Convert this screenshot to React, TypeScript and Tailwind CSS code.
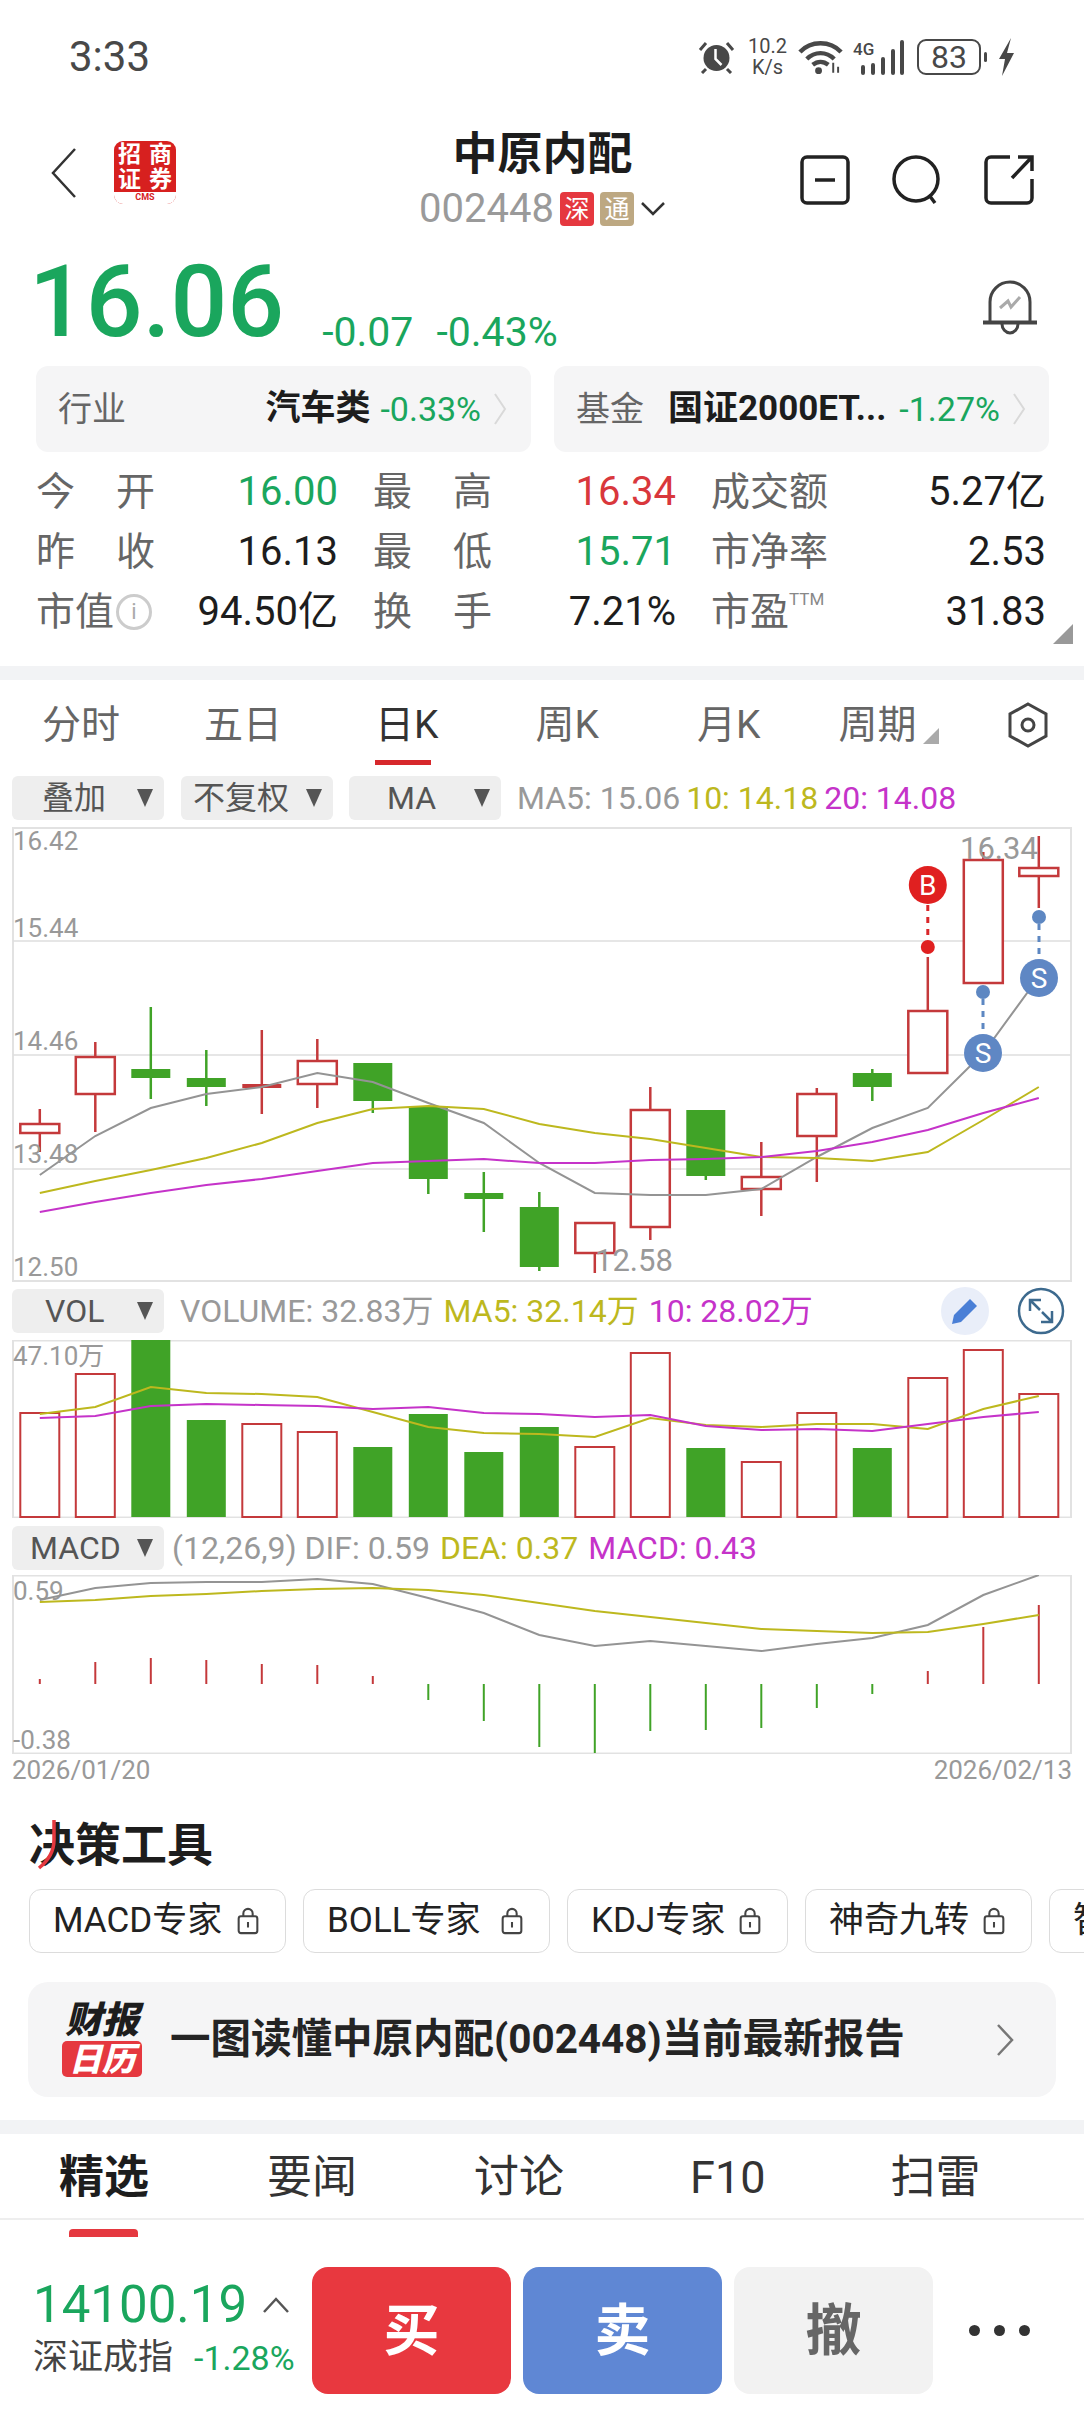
import React from "react";

// x position of the n-th trading day on all three charts
const dayX = (i: number) => 39.8 + 55.5 * i;

const RED = "#c4393b";
const GREEN = "#40a327";
const YELLOW = "#bdb81e";
const MAGENTA = "#c533c9";
const GRAY_LINE = "#949494";

interface Candle {
  up: boolean;
  high: number;
  low: number;
  top: number;
  bottom: number;
  filled?: boolean;
}

const candles: Candle[] = [
  { up: true, high: 282, low: 325, top: 297, bottom: 306 },
  { up: true, high: 215, low: 305, top: 230, bottom: 267 },
  { up: false, high: 180, low: 272, top: 242, bottom: 251 },
  { up: false, high: 223, low: 279, top: 251, bottom: 260 },
  { up: true, high: 203, low: 287, top: 257, bottom: 261, filled: true },
  { up: true, high: 212, low: 281, top: 234, bottom: 257 },
  { up: false, high: 236, low: 286, top: 236, bottom: 274 },
  { up: false, high: 279, low: 367, top: 279, bottom: 352 },
  { up: false, high: 345, low: 405, top: 366, bottom: 372 },
  { up: false, high: 365, low: 444, top: 380, bottom: 440 },
  { up: true, high: 396, low: 446, top: 396, bottom: 426 },
  { up: true, high: 260, low: 413, top: 283, bottom: 400 },
  { up: false, high: 283, low: 353, top: 283, bottom: 349 },
  { up: true, high: 315, low: 389, top: 350, bottom: 362 },
  { up: true, high: 261, low: 355, top: 267, bottom: 309 },
  { up: false, high: 242, low: 274, top: 246, bottom: 260 },
  { up: true, high: 130, low: 246, top: 184, bottom: 246 },
  { up: true, high: 25, low: 156, top: 33, bottom: 156 },
  { up: true, high: 9, low: 81, top: 41, bottom: 49 },
];

const priceMa5 = [348, 309, 281, 267, 260, 246, 255, 276, 296, 336, 366, 368, 368, 362, 330, 301, 281, 226, 150];
const priceMa10 = [366, 354, 343, 331, 316, 296, 282, 279, 282, 297, 306, 312, 321, 330, 331, 334, 325, 293, 260];
const priceMa20 = [385, 375, 366, 358, 352, 344, 336, 334, 332, 336, 336, 333, 332, 330, 324, 315, 303, 286, 271];

const volumeTops = [72, 33, 0, 80, 83, 91, 107, 74, 112, 87, 106, 12, 108, 121, 72, 108, 37, 9, 53];
const volumeMa5 = [74, 67, 47, 53, 54, 57, 72, 87, 93, 94, 97, 78, 85, 87, 84, 84, 89, 69, 56];
const volumeMa10 = [78, 76, 66, 64, 65, 66, 69, 67, 73, 74, 77, 75, 86, 90, 89, 91, 84, 77, 72];

const dif = [25, 13, 8, 7, 7, 4, 9, 23, 38, 60, 71, 66, 71, 76, 69, 63, 50, 20, 0];
const dea = [27, 25, 21, 19, 16, 14, 13, 15, 20, 28, 36, 42, 48, 54, 56, 58, 57, 49, 40];
const macdEnds = [104, 87, 83, 85, 89, 90, 101, 125, 146, 172, 178, 156, 155, 153, 133, 119, 96, 52, 30];
const MACD_BASE = 109;

function Polyline({ values, color }: { values: number[]; color: string }) {
  const points = values.map((y, i) => `${dayX(i)},${y}`).join(" ");
  return <polyline points={points} fill="none" stroke={color} strokeWidth={2} />;
}

function PriceChart() {
  return (
    <svg viewBox="12 0 1060 455" className="ml-3 block h-[455px] w-[1060px]">
      <rect x="13" y="1" width="1058" height="453" fill="#fff" stroke="#e2e2e2" strokeWidth="2" />
      {[114, 228, 342].map((y) => (
        <line key={y} x1="13" x2="1071" y1={y} y2={y} stroke="#dedede" strokeWidth="1.5" />
      ))}
      {candles.map((c, i) => {
        const x = dayX(i);
        const color = c.up ? RED : GREEN;
        return (
          <g key={i}>
            <line x1={x} x2={x} y1={c.high} y2={c.low} stroke={color} strokeWidth={2.5} />
            {c.up && !c.filled ? (
              <rect x={x - 19.5} y={c.top} width={39} height={c.bottom - c.top} fill="#fff" stroke={color} strokeWidth={2.5} />
            ) : (
              <rect x={x - 19.5} y={c.top} width={39} height={c.bottom - c.top} fill={color} />
            )}
          </g>
        );
      })}
      <Polyline values={priceMa5} color={GRAY_LINE} />
      <Polyline values={priceMa10} color={YELLOW} />
      <Polyline values={priceMa20} color={MAGENTA} />
      <g fill="#999" fontSize="26">
        <text x="13" y="23">16.42</text>
        <text x="13" y="110">15.44</text>
        <text x="13" y="223">14.46</text>
        <text x="13" y="336">13.48</text>
        <text x="13" y="449">12.50</text>
        <text x="960" y="32" fontSize="31">16.34</text>
        <text x="595" y="444" fontSize="31">12.58</text>
      </g>
      {/* buy and sell markers */}
      <line x1="927.8" x2="927.8" y1="78" y2="114" stroke="#d9262a" strokeWidth="3" strokeDasharray="6 6" />
      <circle cx="927.8" cy="120" r="7" fill="#e02020" />
      <circle cx="927.8" cy="58" r="19" fill="#e02020" />
      <text x="927.8" y="68" fill="#fff" fontSize="28" textAnchor="middle">B</text>
      <line x1="983" x2="983" y1="172" y2="208" stroke="#5d87c2" strokeWidth="3" strokeDasharray="6 6" />
      <circle cx="983" cy="165" r="7" fill="#5d87c2" />
      <circle cx="983" cy="226" r="19" fill="#5f87c4" />
      <text x="983" y="236" fill="#fff" fontSize="28" textAnchor="middle">S</text>
      <line x1="1039" x2="1039" y1="97" y2="132" stroke="#5d87c2" strokeWidth="3" strokeDasharray="6 6" />
      <circle cx="1039" cy="90" r="7" fill="#5d87c2" />
      <circle cx="1039" cy="151" r="19" fill="#5f87c4" />
      <text x="1039" y="161" fill="#fff" fontSize="28" textAnchor="middle">S</text>
    </svg>
  );
}

function VolumeChart() {
  return (
    <svg viewBox="12 0 1060 178" className="ml-3 block h-[178px] w-[1060px]">
      <rect x="13" y="0.5" width="1058" height="177" fill="#fff" stroke="#e2e2e2" strokeWidth="2" />
      {volumeTops.map((top, i) => {
        const x = dayX(i);
        return candles[i].up ? (
          <rect key={i} x={x - 19.5} y={top + 1} width={39} height={176 - top} fill="#fff" stroke={RED} strokeWidth={2} />
        ) : (
          <rect key={i} x={x - 19.5} y={top} width={39} height={177 - top} fill={GREEN} />
        );
      })}
      <text x="13" y="25" fill="#999" fontSize="26">47.10万</text>
      <Polyline values={volumeMa5} color={YELLOW} />
      <Polyline values={volumeMa10} color={MAGENTA} />
    </svg>
  );
}

function MacdChart() {
  return (
    <svg viewBox="12 0 1060 179" className="ml-3 block h-[179px] w-[1060px]">
      <rect x="13" y="0.5" width="1058" height="178" fill="#fff" stroke="#e2e2e2" strokeWidth="2" />
      <text x="13" y="25" fill="#999" fontSize="26">0.59</text>
      <text x="13" y="174" fill="#999" fontSize="26">-0.38</text>
      {macdEnds.map((end, i) => (
        <line
          key={i}
          x1={dayX(i)}
          x2={dayX(i)}
          y1={MACD_BASE}
          y2={end}
          stroke={end < MACD_BASE ? RED : GREEN}
          strokeWidth={2}
        />
      ))}
      <Polyline values={dif} color={GRAY_LINE} />
      <Polyline values={dea} color={YELLOW} />
    </svg>
  );
}

function StatusBar() {
  return (
    <div className="flex h-[114px] items-center justify-between pl-[69px] pr-[70px] text-[#484848]">
      <span className="text-[42px] leading-none">3:33</span>
      <div className="flex items-center">
        <svg viewBox="0 0 37 34" className="h-[34px] w-[37px]" fill="#484848">
          <circle cx="18.5" cy="18" r="13" />
          <path d="M17.5 9v10l6 6" fill="none" stroke="#fff" strokeWidth="2.5" />
          <path d="M2 10 8 3M35 10 29 3M8 29l-4 4M29 29l4 4" fill="none" stroke="#484848" strokeWidth="3" />
        </svg>
        <div className="ml-[12px] flex w-[41px] flex-col items-center text-[20px] leading-[21px]">
          <span>10.2</span>
          <span>K/s</span>
        </div>
        <svg viewBox="0 0 46 36" className="ml-[10px] h-[36px] w-[45px]" fill="none" stroke="#484848" strokeWidth="4.500">
          <path d="M2 13C13 1 33 1 44 13" />
          <path d="M9 20c8-8 20-8 28 0" />
          <path d="M15 26c5-4 11-4 16 0" />
          <circle cx="21" cy="32" r="3.500" fill="#484848" stroke="none" />
          <path d="M36 24v10M41 28v6" strokeWidth="2" />
        </svg>
        <div className="relative ml-[10px] h-[36px] w-[52px]">
          <span className="absolute left-0 top-0 text-[17px] font-medium leading-[20px]">4G</span>
          <svg viewBox="0 0 52 36" className="h-[36px] w-[52px]" fill="#484848">
            <rect x="8" y="26" width="4" height="10" rx="2" />
            <rect x="18" y="24" width="4" height="12" rx="2" />
            <rect x="28" y="18" width="4" height="18" rx="2" />
            <rect x="38" y="10" width="4" height="26" rx="2" />
            <rect x="47" y="1" width="4" height="35" rx="2" />
          </svg>
        </div>
        <div className="ml-[12px] flex h-[36px] w-[64px] items-center justify-center rounded-[9px] border-2 border-[#484848] text-[32px] leading-none">
          83
        </div>
        <svg viewBox="0 0 32 38" className="ml-[1px] h-[38px] w-[32px]" fill="#484848">
          <rect x="2" y="14" width="3" height="10" rx="1.5" />
          <path d="M29 0 17 21h6l-3 17 12-23h-7z" />
        </svg>
      </div>
    </div>
  );
}

function NavBar() {
  return (
    <div className="grid h-[136px] grid-cols-[1fr_auto_1fr] items-start pl-[51px] pr-[50px] pt-[27px]">
      <div className="flex items-center">
        <svg viewBox="0 0 26 50" className="h-[50px] w-[26px]" fill="none" stroke="#333" strokeWidth="2.5">
          <path d="M24 1 2 25l22 24" />
        </svg>
        <div className="ml-[37px] flex h-[63px] w-[62px] flex-col overflow-hidden rounded-[9px] bg-[#d7201f]">
          <div className="grid flex-1 grid-cols-2 place-items-center pt-[2px] text-[23px] font-bold leading-[22px] text-white">
            <span>招</span>
            <span>商</span>
            <span>证</span>
            <span>券</span>
          </div>
          <div className="flex h-[12px] items-center justify-center bg-white text-[9px] font-bold text-[#d7201f]">CMS</div>
        </div>
      </div>
      <div className="-mt-[11px] flex flex-col items-center">
        <div className="text-[45px] font-bold leading-[50px] text-[#1d1d1d]">中原内配</div>
        <div className="mt-[11px] flex items-center">
          <span className="text-[40px] leading-[36px] text-[#9a9a9a]">002448</span>
          <span className="ml-[6px] flex h-[34px] w-[34px] items-center justify-center rounded-[4px] bg-[#e5383f] text-[25px] leading-none text-white">深</span>
          <span className="ml-[6px] flex h-[34px] w-[34px] items-center justify-center rounded-[4px] bg-[#bda882] text-[25px] leading-none text-white">通</span>
          <svg viewBox="0 0 26 14" className="ml-[6px] h-[14px] w-[26px]" fill="none" stroke="#333" strokeWidth="2.5">
            <path d="M2 1l11 11L24 1" />
          </svg>
        </div>
      </div>
      <div className="flex items-center justify-end gap-[42px] pt-[14px]">
        <svg viewBox="0 0 50 50" className="h-[50px] w-[50px]" fill="none" stroke="#222" strokeWidth="3.5">
          <rect x="2" y="2" width="46" height="46" rx="5" />
          <path d="M15 25h20" />
        </svg>
        <svg viewBox="0 0 50 50" className="h-[50px] w-[50px]" fill="none" stroke="#222" strokeWidth="3.5">
          <circle cx="24" cy="24" r="22" />
          <path d="M37 40l6 8" />
        </svg>
        <svg viewBox="0 0 50 50" className="h-[50px] w-[50px]" fill="none" stroke="#222" strokeWidth="3.5">
          <path d="M26 2H7a5 5 0 0 0-5 5v36a5 5 0 0 0 5 5h36a5 5 0 0 0 5-5V24" />
          <path d="M28 23 47 3M34 2h14v14" />
        </svg>
      </div>
    </div>
  );
}

function PriceRow() {
  return (
    <div className="flex h-[116px] items-start justify-between pl-[29px] pr-[46px]">
      <div className="flex items-end">
        <span className="text-[100px] font-medium leading-[104px] text-[#1aa65d]">16.06</span>
        <span className="mb-[2px] ml-[38px] text-[41px] leading-[40px] text-[#1aa65d]">-0.07</span>
        <span className="mb-[2px] ml-[23px] text-[41px] leading-[40px] text-[#1aa65d]">-0.43%</span>
      </div>
      <svg viewBox="0 0 56 58" className="mt-[28px] h-[58px] w-[56px]" fill="none" stroke="#444" strokeWidth="3">
        <path d="M8 44V24a20 20 0 0 1 40 0v20" />
        <path d="M1 44.500h54" strokeWidth="4" />
        <path d="M20 46a8 9 0 0 0 16 0" />
        <path d="M18 30l8-7 3 6 9-10" stroke="#aaa" />
      </svg>
    </div>
  );
}

function InfoCard({ label, name, change, wide }: { label: string; name: string; change: string; wide?: boolean }) {
  return (
    <div className={`flex h-[86px] w-[495px] items-center rounded-[12px] bg-[#f5f5f6] pl-[22px] ${wide ? "pr-[20px]" : "pr-[24px]"}`}>
      <span className="shrink-0 whitespace-nowrap text-[34px] text-[#666]">{label}</span>
      <span className={`${wide ? "ml-[24px]" : "ml-auto"} whitespace-nowrap text-[35px] font-bold text-[#1d1d1d]`}>{name}</span>
      <span className={`${wide ? "ml-[13px]" : "ml-[10px]"} whitespace-nowrap text-[34px] text-[#1aa65d]`}>{change}</span>
      <svg viewBox="0 0 14 32" className="ml-[12px] h-[32px] w-[14px] shrink-0" fill="none" stroke="#d9d9d9" strokeWidth="2">
        <path d="M2 1l10 15L2 31" />
      </svg>
    </div>
  );
}

function Stat({ label, value, tone }: { label: React.ReactNode; value: string; tone: string }) {
  return (
    <div className="flex h-[60px] items-center justify-between">
      <div className="text-[39px] text-[#666]">{label}</div>
      <span className={`text-[40px] ${tone}`}>{value}</span>
    </div>
  );
}

function Spaced({ a, b }: { a: string; b: string }) {
  return (
    <span className="flex w-[119px] justify-between">
      <span>{a}</span>
      <span>{b}</span>
    </span>
  );
}

function StatsGrid() {
  const green = "text-[#1aa65d]";
  const red = "text-[#d9373c]";
  const dark = "text-[#1d1d1d]";
  return (
    <div className="relative mt-[10px] grid h-[180px] grid-cols-[302px_303px_335px] gap-x-[35px] pl-[36px]">
      <Stat label={<Spaced a="今" b="开" />} value="16.00" tone={green} />
      <Stat label={<Spaced a="最" b="高" />} value="16.34" tone={red} />
      <Stat label="成交额" value="5.27亿" tone={dark} />
      <Stat label={<Spaced a="昨" b="收" />} value="16.13" tone={dark} />
      <Stat label={<Spaced a="最" b="低" />} value="15.71" tone={green} />
      <Stat label="市净率" value="2.53" tone={dark} />
      <Stat
        label={
          <span className="flex items-center">
            市值
            <span className="ml-[2px] flex h-[36px] w-[36px] items-center justify-center rounded-full border-[3px] border-[#ccc] text-[22px] leading-none text-[#aaa]">i</span>
          </span>
        }
        value="94.50亿"
        tone={dark}
      />
      <Stat label={<Spaced a="换" b="手" />} value="7.21%" tone={dark} />
      <Stat
        label={
          <span className="flex items-start">
            市盈<span className="mt-[8px] text-[17px] leading-none text-[#888]">TTM</span>
          </span>
        }
        value="31.83"
        tone={dark}
      />
      <div className="absolute bottom-[-2px] right-[11px] h-0 w-0 border-b-[20px] border-l-[20px] border-b-[#999] border-l-transparent" />
    </div>
  );
}

function ChartTabs() {
  return (
    <div className="flex h-[96px] items-center pb-[6px] text-[39px] leading-none text-[#666]">
      <span className="ml-[42px]">分时</span>
      <span className="ml-[84px]">五日</span>
      <span className="relative ml-[93px] text-[#333]">
        日K
        <span className="absolute -bottom-[20px] left-0 h-[5px] w-[56px] bg-[#d7282c]" />
      </span>
      <span className="ml-[97px]">周K</span>
      <span className="ml-[98px]">月K</span>
      <span className="ml-[78px]">周期</span>
      <span className="ml-[6px] mt-[22px] h-0 w-0 border-b-[16px] border-l-[16px] border-b-[#aaa] border-l-transparent" />
      <svg viewBox="0 0 40 46" className="ml-[69px] h-[46px] w-[40px]" fill="none" stroke="#444" strokeWidth="3">
        <path d="M20 2 38 12v22L20 44 2 34V12z" />
        <circle cx="20" cy="23" r="6" />
      </svg>
    </div>
  );
}

function Dropdown({ label, labelCls }: { label: string; labelCls: string }) {
  return (
    <div className="flex h-[44px] w-[152px] items-center rounded-[6px] bg-[#eeeeee] text-[#555]">
      <span className={`whitespace-nowrap text-[32px] leading-none ${labelCls}`}>{label}</span>
      <span className="ml-auto mr-[11px] h-0 w-0 border-x-[8px] border-t-[18px] border-x-transparent border-t-[#555]" />
    </div>
  );
}

function Legend({ children, tight }: { children: React.ReactNode; tight?: boolean }) {
  return (
    <div className={`flex items-center whitespace-nowrap text-[32px] leading-none ${tight ? "gap-[6px]" : "gap-[10px]"}`}>
      {children}
    </div>
  );
}

function ChartPanel() {
  return (
    <div>
      <div className="flex h-[44px] items-center pl-3">
        <Dropdown label="叠加" labelCls="ml-[30px]" />
        <div className="ml-[17px]">
          <Dropdown label="不复权" labelCls="ml-[12px]" />
        </div>
        <div className="ml-[16px]">
          <Dropdown label="MA" labelCls="ml-[38px]" />
        </div>
        <div className="ml-[16px]">
          <Legend tight>
            <span className="text-[#999]">MA5: 15.06</span>
            <span className="text-[#bdb81e]">10: 14.18</span>
            <span className="text-[#c533c9]">20: 14.08</span>
          </Legend>
        </div>
      </div>
      <div className="mt-[7px]">
        <PriceChart />
      </div>
      <div className="mt-[7px] flex h-[44px] items-center pl-3 pr-[19px]">
        <Dropdown label="VOL" labelCls="ml-[33px]" />
        <div className="ml-[16px]">
          <Legend>
            <span className="text-[#999]">VOLUME: 32.83万</span>
            <span className="text-[#bdb81e]">MA5: 32.14万</span>
            <span className="text-[#c533c9]">10: 28.02万</span>
          </Legend>
        </div>
        <div className="ml-auto flex h-[48px] w-[48px] items-center justify-center rounded-full bg-[#e9eef9]">
          <svg viewBox="0 0 30 30" className="h-[30px] w-[30px]" fill="#4a7fd6">
            <path d="M20 3l7 7L11 26l-9 2 2-9z" />
          </svg>
        </div>
        <svg viewBox="0 0 48 48" className="ml-[28px] h-[48px] w-[48px]" fill="none" stroke="#3d6a8e" strokeWidth="2.500">
          <circle cx="24" cy="24" r="22" />
          <path d="M13 24V13h11M14 14l9 9M35 24v11H24M34 34l-9-9" />
        </svg>
      </div>
      <div className="mt-[7px]">
        <VolumeChart />
      </div>
      <div className="mt-[8px] flex h-[43px] items-center pl-3">
        <Dropdown label="MACD" labelCls="ml-[18px]" />
        <div className="ml-[8px]">
          <Legend>
            <span className="text-[#999]">(12,26,9) DIF: 0.59</span>
            <span className="text-[#bdb81e]">DEA: 0.37</span>
            <span className="text-[#c533c9]">MACD: 0.43</span>
          </Legend>
        </div>
      </div>
      <div className="mt-[6px]">
        <MacdChart />
      </div>
      <div className="flex h-[32px] items-center justify-between pl-[12px] pr-[12px] text-[26px] leading-none text-[#999]">
        <span>2026/01/20</span>
        <span>2026/02/13</span>
      </div>
    </div>
  );
}

function Lock() {
  return (
    <svg viewBox="0 0 24 30" className="h-[28px] w-[24px]" fill="none" stroke="#444" strokeWidth="2.200">
      <rect x="2" y="10" width="20" height="18" rx="2.500" />
      <path d="M7 10V7a5 5 0 0 1 10 0v3M12 16v6" />
    </svg>
  );
}

const tools = [
  { name: "MACD专家", width: "w-[257px]" },
  { name: "BOLL专家", width: "w-[247px]" },
  { name: "KDJ专家", width: "w-[221px]" },
  { name: "神奇九转", width: "w-[227px]" },
];

function DecisionTools() {
  return (
    <div className="pl-[29px]">
      <div className="relative mt-[34px] w-fit text-[46px] font-bold leading-[50px] text-[#1d1d1d]">
        决策工具
        <svg viewBox="0 0 20 50" className="absolute left-[8px] top-0 h-[50px] w-[20px]" fill="none" stroke="#e5383f" strokeWidth="3.500">
          <path d="M17 0v20q0 16-15 28" />
        </svg>
      </div>
      <div className="mt-[19px] flex gap-[17px] overflow-hidden">
        {tools.map((t) => (
          <div key={t.name} className={`flex h-[64px] shrink-0 items-center justify-between rounded-[12px] border border-[#dcdcdc] pl-[23px] pr-[25px] ${t.width}`}>
            <span className="whitespace-nowrap text-[35px] text-[#222]">{t.name}</span>
            <Lock />
          </div>
        ))}
        <div className="flex h-[64px] w-[200px] shrink-0 items-center rounded-[12px] border border-[#dcdcdc] pl-[23px] text-[35px] text-[#222]">智能</div>
      </div>
    </div>
  );
}

function ReportBanner() {
  return (
    <div className="mx-[28px] mt-[29px] flex h-[115px] items-center rounded-[20px] bg-[#f5f5f6] pl-[34px] pr-[42px]">
      <div className="flex w-[80px] flex-col items-center italic">
        <span className="text-[37px] font-black leading-[38px] text-[#1d1d1d]">财报</span>
        <span className="mt-[1px] flex h-[36px] w-[80px] items-center justify-center rounded-[5px] bg-[#e5383f] text-[33px] font-black leading-none text-white">日历</span>
      </div>
      <span className="ml-[28px] whitespace-nowrap text-[40.500px] font-bold text-[#242424]">一图读懂中原内配(002448)当前最新报告</span>
      <svg viewBox="0 0 18 32" className="ml-auto h-[32px] w-[18px]" fill="none" stroke="#777" strokeWidth="2.500">
        <path d="M2 1l14 15L2 31" />
      </svg>
    </div>
  );
}

function NewsTabs() {
  return (
    <div className="flex h-[86px] border-b-2 border-[#eeeeee] text-[45px] leading-none text-[#333]">
      <span className="relative ml-[59px] mt-[21px] font-bold text-[#1d1d1d]">
        精选
        <span className="absolute -bottom-[19px] left-[10px] h-[8px] w-[69px] rounded-t-[4px] bg-[#e5383f]" />
      </span>
      <span className="ml-[118px] mt-[21px]">要闻</span>
      <span className="ml-[117px] mt-[21px]">讨论</span>
      <span className="ml-[126px] mt-[21px]">F10</span>
      <span className="ml-[125px] mt-[21px]">扫雷</span>
    </div>
  );
}

function TradeBar() {
  return (
    <div className="flex items-center pt-[47px]">
      <div className="-mt-[8px] w-[312px] pl-[33px]">
        <div className="flex items-center">
          <span className="text-[51px] leading-[58px] text-[#1aa65d]">14100.19</span>
          <svg viewBox="0 0 28 18" className="ml-[15px] h-[18px] w-[28px]" fill="none" stroke="#555" strokeWidth="2.500">
            <path d="M2 16 14 3l12 13" />
          </svg>
        </div>
        <div className="mt-[4px] flex items-center whitespace-nowrap">
          <span className="text-[35px] leading-[40px] text-[#444]">深证成指</span>
          <span className="ml-[21px] text-[34px] leading-[40px] text-[#1aa65d]">-1.28%</span>
        </div>
      </div>
      <div className="flex gap-[12px] text-[56px] font-bold leading-none">
        <div className="flex h-[127px] w-[199px] items-center justify-center rounded-[16px] bg-[#e8383f] text-white">买</div>
        <div className="flex h-[127px] w-[199px] items-center justify-center rounded-[16px] bg-[#5f87d4] text-white">卖</div>
        <div className="flex h-[127px] w-[199px] items-center justify-center rounded-[16px] bg-[#f2f2f2] text-[#666]">撤</div>
      </div>
      <div className="ml-[36px] flex gap-[14px]">
        <span className="h-[11px] w-[11px] rounded-full bg-[#333]" />
        <span className="h-[11px] w-[11px] rounded-full bg-[#333]" />
        <span className="h-[11px] w-[11px] rounded-full bg-[#333]" />
      </div>
    </div>
  );
}

export default function App() {
  return (
    <div className="h-[2412px] w-[1084px] overflow-hidden bg-white font-['Roboto','Noto_Sans_CJK_SC',sans-serif]">
      <StatusBar />
      <NavBar />
      <PriceRow />
      <div className="flex justify-between pl-[36px] pr-[35px]">
        <InfoCard label="行业" name="汽车类" change="-0.33%" />
        <InfoCard label="基金" name="国证2000ET..." change="-1.27%" wide />
      </div>
      <StatsGrid />
      <div className="mt-[24px] h-[14px] bg-[#f2f3f5]" />
      <ChartTabs />
      <ChartPanel />
      <DecisionTools />
      <ReportBanner />
      <div className="mt-[23px] h-[14px] bg-[#f2f3f5]" />
      <NewsTabs />
      <TradeBar />
    </div>
  );
}
